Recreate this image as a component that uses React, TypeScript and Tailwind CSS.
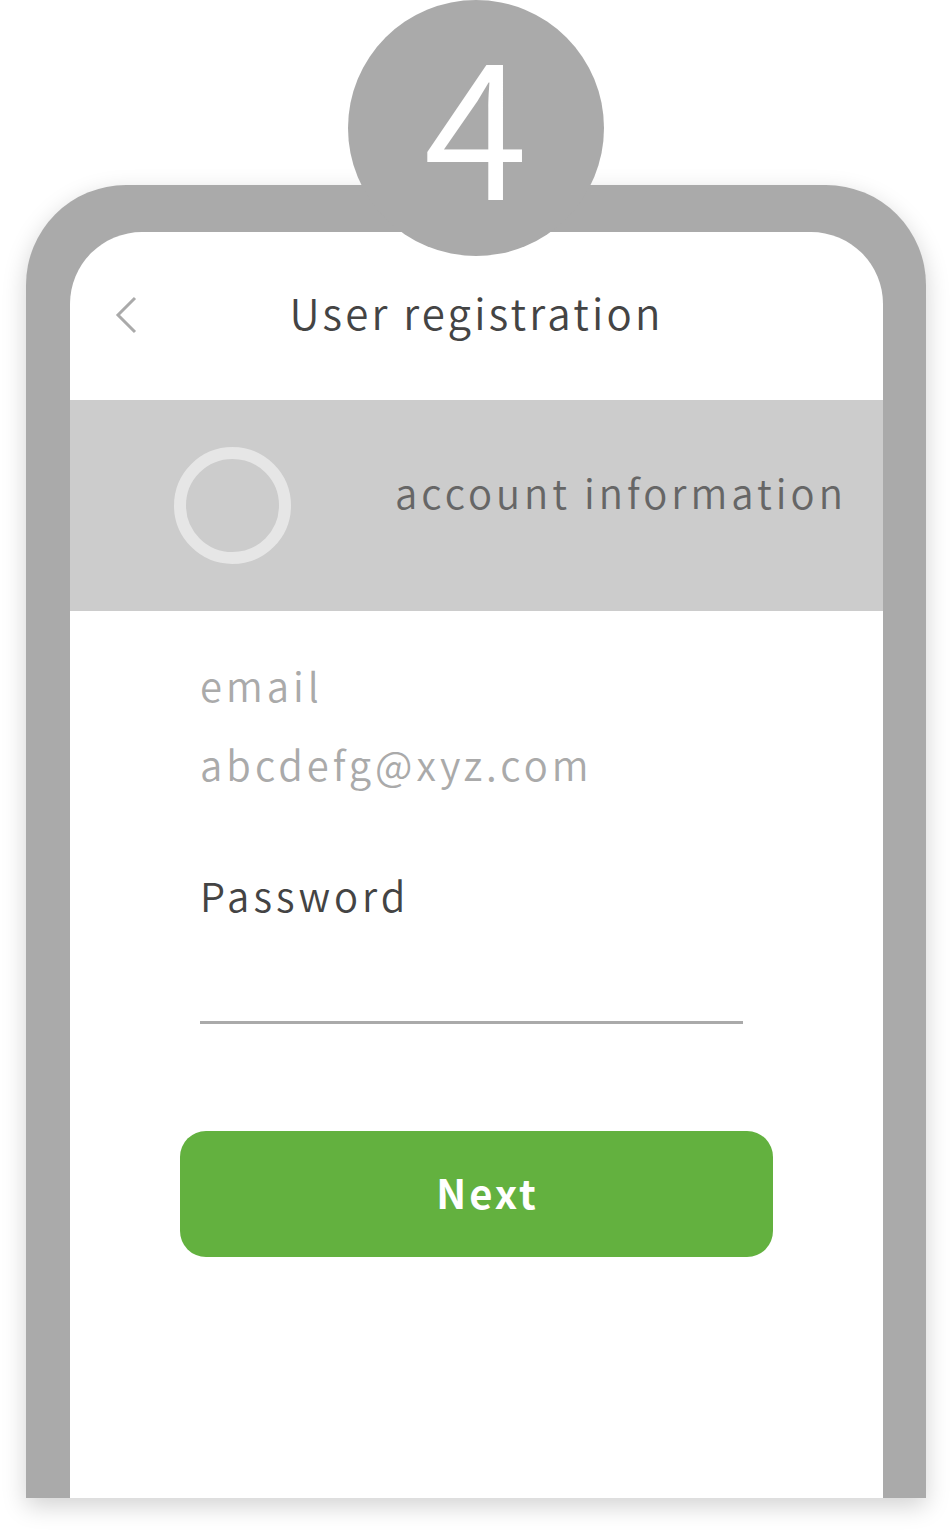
const font = { fontFamily: '"Noto Sans CJK JP", "Noto Sans", sans-serif' };

function BackChevron() {
  return (
    <svg width="24" height="38" viewBox="0 0 24 38" fill="none">
      <path d="M21 2 L4 19 L21 36" stroke="#aaaaaa" strokeWidth="3" />
    </svg>
  );
}

export default function App() {
  return (
    <div className="w-[952px] h-[1532px] bg-white relative overflow-hidden" style={font}>
      {/* Phone frame */}
      <div className="absolute left-[26px] top-[185px] w-[900px] h-[1313px] bg-[#aaaaaa] rounded-t-[100px] pt-[47px] pl-[44px] pr-[43px] shadow-[0_8px_24px_rgba(0,0,0,0.18)]">
        <div className="h-full bg-white rounded-t-[72px] flex flex-col">
          {/* Header */}
          <div className="h-[168px] grid grid-cols-[1fr_auto_1fr] items-center">
            <div className="pl-[44px] mt-[-2px]">
              <BackChevron />
            </div>
            <h1 className="text-[42px] font-[350] text-[#444444] tracking-[3.2px] leading-none mt-[-8px]">User registration</h1>
            <div />
          </div>

          {/* Step band */}
          <div className="h-[211px] bg-[#cccccc] flex items-center pl-[104px]">
            <div className="w-[117px] h-[117px] rounded-full border-[12px] border-[#e6e6e6]" />
            <span className="ml-[104px] mt-[-28px] text-[40px] font-[350] text-[#666666] tracking-[4px] leading-none">account information</span>
          </div>

          {/* Fields */}
          <div className="pl-[130px] pt-[46px] flex flex-col">
            <span className="text-[40px] font-[350] text-[#aaaaaa] tracking-[4px] leading-[56px]">email</span>
            <span className="mt-[23px] text-[40px] font-[350] text-[#aaaaaa] tracking-[4px] leading-[56px]">abcdefg@xyz.com</span>
            <span className="mt-[75px] text-[40px] font-[350] text-[#444444] tracking-[4px] leading-[56px]">Password</span>
            <div className="mt-[98px] w-[543px] h-[3px] bg-[#aaaaaa]" />
          </div>

          <div className="pl-[110px] pt-[107px]">
            <button className="w-[593px] h-[126px] rounded-[26px] bg-[#63b13f] text-white text-[40px] font-semibold tracking-[3px] flex items-center justify-center pl-[22px] pb-[4px]">
              Next
            </button>
          </div>
        </div>
      </div>

      {/* Step badge */}
      <div className="absolute left-[348px] top-0 w-[256px] h-[256px] rounded-full bg-[#aaaaaa] flex items-center justify-center">
        <span className="text-[190px] font-[350] text-white leading-[1.1] mt-[-22px]">4</span>
      </div>
    </div>
  );
}
